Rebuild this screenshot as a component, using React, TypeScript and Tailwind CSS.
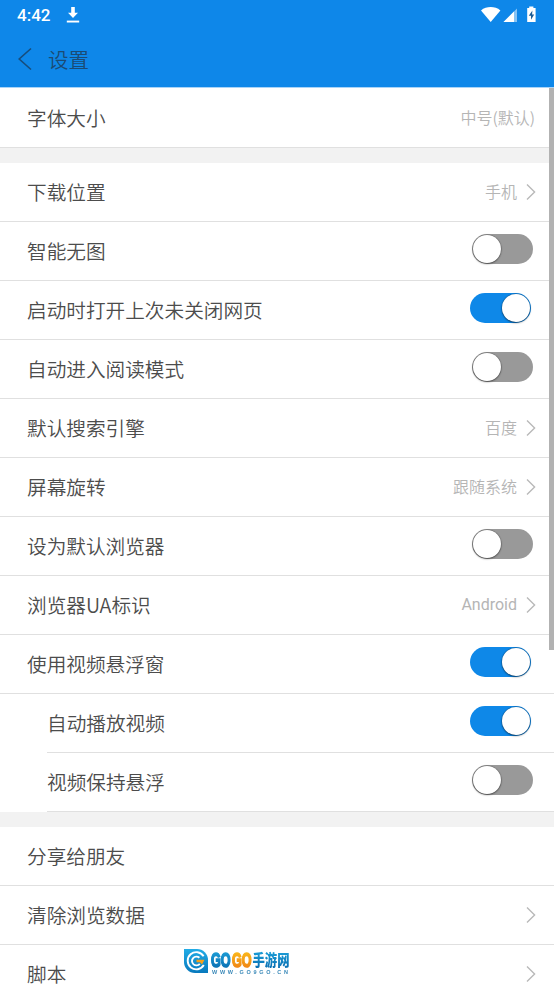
import { useState } from 'react';
import type { ReactNode } from 'react';

function Chevron() {
  return (
    <svg width="10" height="18" viewBox="0 0 10 18" fill="none" stroke="#b9b9b9" strokeWidth="1.4">
      <path d="M1 1.5L8.6 9L1 16.5" />
    </svg>
  );
}

function Toggle({ defaultOn = false }: { defaultOn?: boolean }) {
  const [on, setOn] = useState(defaultOn);

  return (
    <button
      role="switch"
      aria-checked={on}
      onClick={() => setOn(!on)}
      className={`flex items-center w-[61px] h-[30px] rounded-full mb-1
        ${on ? 'bg-[#0e88e8] justify-end mr-[5px]' : 'bg-[#999999] justify-start mr-[3px]'}`}>
      <span className="w-[28px] h-[28px] mx-px rounded-full bg-white shadow-[0_0_1px_0.5px_rgba(0,0,0,0.3),0_1px_2px_rgba(0,0,0,0.4)]" />
    </button>
  );
}

function Row({ label, value, arrow, sub, children }: {
  label: string;
  value?: ReactNode;
  arrow?: boolean;
  sub?: boolean;
  children?: ReactNode;
}) {
  return (
    <div className={`h-[59px] shrink-0 ${sub ? 'pl-[47px]' : ''}`}>
      <div className={`h-full flex items-center justify-between border-b border-[#e0e0e0] pr-[18px] ${sub ? '' : 'pl-[27px]'}`}>
        <span className="text-[19.65px] leading-[24px] text-[#4c4c4c]">{label}</span>
        <div className="flex items-center">
          {value && <span className={`mb-[2px] text-[16px] leading-[18px] text-[#b5b5b5] ${arrow ? '' : 'mr-px'}`}>{value}</span>}
          {arrow && <span className="ml-[9px]"><Chevron /></span>}
          {children}
        </div>
      </div>
    </div>
  );
}

function StatusBar() {
  return (
    <div className="h-[30px] flex items-center justify-between px-[17px] text-white">
      <div className="flex items-center">
        <span className="font-[Roboto] font-medium text-[17px] leading-none">4:42</span>
        <svg className="ml-[16px] mb-px" width="14" height="18" viewBox="0 0 14 18" fill="#fff">
          <path d="M5.2 1H8.8V6.7H12L7 12L2 6.7H5.2Z" />
          <path d="M.8 14.6H13.2V16.5H.8Z" />
        </svg>
      </div>
      <svg width="56" height="18" viewBox="0 0 56 18">
        <path d="M0 4.4C5.6 0 13.8 0 19.4 4.4L9.7 16Z" fill="#fff" />
        <path d="M22.5 16L36 2.5V16Z" fill="#fff" opacity=".5" />
        <path d="M22.5 16L33 5.5V16Z" fill="#fff" />
        <path d="M46.2 2H48.2V.4H52.4V2H54.6V16H46.2Z" fill="#fff" />
        <path d="M51.4 4.5L47.8 9.8H50V13.8L53.2 8.5H51.1Z" fill="#1b5c96" />
      </svg>
    </div>
  );
}

function Watermark() {
  return (
    <div className="fixed left-[183px] top-[948px] flex items-start">
      <svg width="26" height="26" viewBox="0 0 26 26">
        <defs>
          <linearGradient id="badge" x1="0" y1="0" x2="0" y2="1">
            <stop offset="0" stopColor="#22ace6" />
            <stop offset="1" stopColor="#0879bd" />
          </linearGradient>
        </defs>
        <path d="M1 1H14A11 11 0 0 1 25 12V25H12A11 11 0 0 1 1 14Z" fill="url(#badge)" />
        <path d="M20.6 8.2A8.6 8.6 0 1 0 20.8 17" fill="none" stroke="#fff" strokeWidth="1.9" />
        <path d="M16.4 9.8A4.4 4.4 0 1 0 16.8 15.8" fill="none" stroke="#fff" strokeWidth="1.9" />
        <path d="M13.5 11.8H21.5L19 16.4L17 14.2H13.5Z" fill="#f6a21b" />
      </svg>
      <svg className="ml-px" width="82" height="28" viewBox="0 0 82 28">
        <defs>
          <linearGradient id="blue" x1="0" y1="0" x2="0" y2="1">
            <stop offset="0" stopColor="#20a8df" />
            <stop offset="1" stopColor="#0869ad" />
          </linearGradient>
          <linearGradient id="orange" x1="0" y1="0" x2="0" y2="1">
            <stop offset="0" stopColor="#fdc51c" />
            <stop offset="1" stopColor="#ef7d14" />
          </linearGradient>
        </defs>
        <g fontFamily="'Liberation Sans Narrow', 'Liberation Sans', sans-serif" fontWeight="700" fontSize="21" strokeWidth="1.7">
          <text x="1" y="18.6" textLength="19.6" lengthAdjust="spacingAndGlyphs" fill="url(#blue)" stroke="url(#blue)">GO</text>
          <text x="22" y="18.6" textLength="19.6" lengthAdjust="spacingAndGlyphs" fill="url(#orange)" stroke="url(#orange)">GO</text>
        </g>
        <text x="42.5" y="18" textLength="37" lengthAdjust="spacingAndGlyphs" fontFamily="'Noto Sans CJK SC', sans-serif" fontWeight="900" fontSize="15.5" fill="url(#blue)">手游网</text>
        <text x="2" y="25.8" textLength="76" fontFamily="'Liberation Sans', sans-serif" fontWeight="700" fontSize="5.5" fill="#3988b8">WWW.GO9GO.CN</text>
      </svg>
    </div>
  );
}

export default function App() {
  return (
    <div className="relative h-screen flex flex-col overflow-hidden bg-white font-['Noto_Sans_CJK_SC',sans-serif] font-[350]">
      <header className="h-[88px] shrink-0 bg-[#0e87e9] border-b border-[#a9d4f8]">
        <StatusBar />
        <div className="h-[58px] flex items-center pl-[18px]">
          <svg width="14" height="24" viewBox="0 0 14 24" fill="none" stroke="#174d7c" strokeWidth="1.6">
            <path d="M13 1.5L1.2 12L13 22.5" />
          </svg>
          <h1 className="ml-[16px] text-[20.5px] leading-[24px] text-[#1b4b74]">设置</h1>
        </div>
      </header>

      <main>
        <div className="pt-px">
          <Row label="字体大小" value="中号(默认)" />
        </div>
        <div className="h-[15px] bg-[#f2f2f2]" />
        <Row label="下载位置" value="手机" arrow />
        <Row label="智能无图"><Toggle /></Row>
        <Row label="启动时打开上次未关闭网页"><Toggle defaultOn /></Row>
        <Row label="自动进入阅读模式"><Toggle /></Row>
        <Row label="默认搜索引擎" value="百度" arrow />
        <Row label="屏幕旋转" value="跟随系统" arrow />
        <Row label="设为默认浏览器"><Toggle /></Row>
        <Row label="浏览器UA标识" value={<span className="font-[Roboto] font-normal">Android</span>} arrow />
        <Row label="使用视频悬浮窗"><Toggle defaultOn /></Row>
        <Row label="自动播放视频" sub><Toggle defaultOn /></Row>
        <Row label="视频保持悬浮" sub><Toggle /></Row>
        <div className="h-[15px] bg-[#f2f2f2]" />
        <Row label="分享给朋友" />
        <Row label="清除浏览数据" arrow />
        <Row label="脚本" arrow />
      </main>

      <div className="absolute right-0 top-[88px] w-[5px] h-[562px] bg-[#b2b2b2]" />
      <Watermark />
    </div>
  );
}
